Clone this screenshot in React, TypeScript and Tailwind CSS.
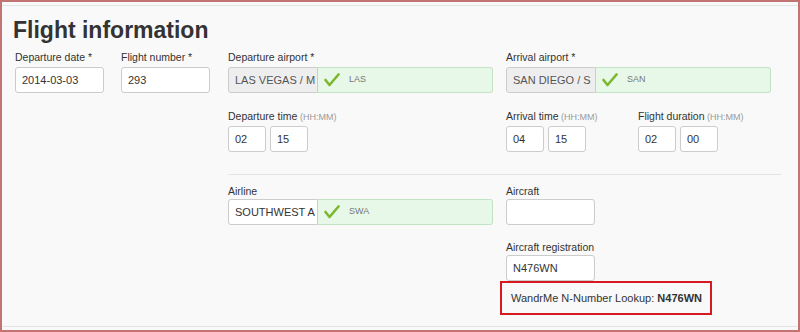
import React from 'react';

const Check = () => (
    <svg width="16" height="14" viewBox="0 0 16 14" className="shrink-0">
        <path d="M1.5 7 L5.5 12 L14.5 1.5" fill="none" stroke="#7cb82f" strokeWidth="2.6" strokeLinecap="round" strokeLinejoin="round" />
    </svg>
);

const Label = ({ text, hint }: { text: string; hint?: string }) => (
    <div className="h-[14px] leading-[14px] text-[10.5px] text-[#333] whitespace-nowrap">
        {text}
        {hint && <span className="text-[9px] text-[#999]"> {hint}</span>}
    </div>
);

const Box = ({ value, w }: { value: string; w: string }) => (
    <div className={`${w} h-[26px] border border-[#ccc] rounded-[3px] bg-white px-[6px] flex items-center text-[11px] text-[#333]`}>
        {value}
    </div>
);

const Lookup = ({ name, code, gray }: { name: string; code: string; gray?: boolean }) => (
    <div className="flex w-[265px] h-[26px]">
        <div
            className={`w-[90px] border border-[#ccc] rounded-l-[3px] px-[6px] flex items-center text-[11px] whitespace-nowrap overflow-hidden ${gray ? 'bg-[#eeeeee] text-[#555]' : 'bg-white text-[#333]'}`}
        >
            {name}
        </div>
        <div className="flex-1 border border-[#c3e4c3] border-l-0 rounded-r-[3px] bg-[#e8f8e8] flex items-center pl-[6px] gap-[9px]">
            <Check />
            <span className="text-[9px] text-[#777]">{code}</span>
        </div>
    </div>
);

const TimePair = ({ h, m }: { h: string; m: string }) => (
    <div className="flex gap-[4px]">
        <Box value={h} w="w-[38px]" />
        <Box value={m} w="w-[38px]" />
    </div>
);

export default function App() {
    return (
        <div className="w-[800px] h-[332px] border-2 border-[#c27474] bg-[#f9f9f9] font-['Liberation_Sans',Arial,sans-serif] overflow-hidden">
            <div className="mt-[3px] h-[322px] border-t border-b border-[#e4e4e4] flex flex-col">
                <h1 className="pl-[11px] pt-[9px] h-[44px] text-[23px] leading-[30px] font-bold text-[#333]">Flight information</h1>

                <div className="flex pl-[13px]">
                    <div className="w-[106px]">
                        <Label text="Departure date *" />
                        <div className="mt-[3px]">
                            <Box value="2014-03-03" w="w-[89px]" />
                        </div>
                    </div>
                    <div className="w-[107px]">
                        <Label text="Flight number *" />
                        <div className="mt-[3px]">
                            <Box value="293" w="w-[89px]" />
                        </div>
                    </div>
                    <div className="w-[278px]">
                        <Label text="Departure airport *" />
                        <div className="mt-[3px]">
                            <Lookup name="LAS VEGAS / M" code="LAS" gray />
                        </div>
                        <div className="mt-[16px]">
                            <Label text="Departure time" hint="(HH:MM)" />
                        </div>
                        <div className="mt-[3px]">
                            <TimePair h="02" m="15" />
                        </div>
                    </div>
                    <div>
                        <Label text="Arrival airport *" />
                        <div className="mt-[3px]">
                            <Lookup name="SAN DIEGO / S" code="SAN" gray />
                        </div>
                        <div className="flex mt-[16px]">
                            <div className="w-[132px]">
                                <Label text="Arrival time" hint="(HH:MM)" />
                                <div className="mt-[3px]">
                                    <TimePair h="04" m="15" />
                                </div>
                            </div>
                            <div>
                                <Label text="Flight duration" hint="(HH:MM)" />
                                <div className="mt-[3px]">
                                    <TimePair h="02" m="00" />
                                </div>
                            </div>
                        </div>
                    </div>
                </div>

                <div className="ml-[226px] mr-[17px] mt-[22px] border-t border-[#e4e4e4]" />

                <div className="flex pl-[226px] pt-[9px]">
                    <div className="w-[278px]">
                        <Label text="Airline" />
                        <div className="mt-[1px]">
                            <Lookup name="SOUTHWEST A" code="SWA" />
                        </div>
                    </div>
                    <div>
                        <Label text="Aircraft" />
                        <div className="mt-[1px]">
                            <Box value="" w="w-[89px]" />
                        </div>
                        <div className="mt-[15px]">
                            <Label text="Aircraft registration" />
                        </div>
                        <div className="mt-[1px]">
                            <Box value="N476WN" w="w-[89px]" />
                        </div>
                        <div className="-ml-[6px] w-[212px] h-[34px] border-2 border-[#d71920] flex items-center pl-[9px] text-[11px] text-[#333] whitespace-nowrap">
                            WandrMe N-Number Lookup:&nbsp;<span className="font-bold">N476WN</span>
                        </div>
                    </div>
                </div>
            </div>
        </div>
    );
}
